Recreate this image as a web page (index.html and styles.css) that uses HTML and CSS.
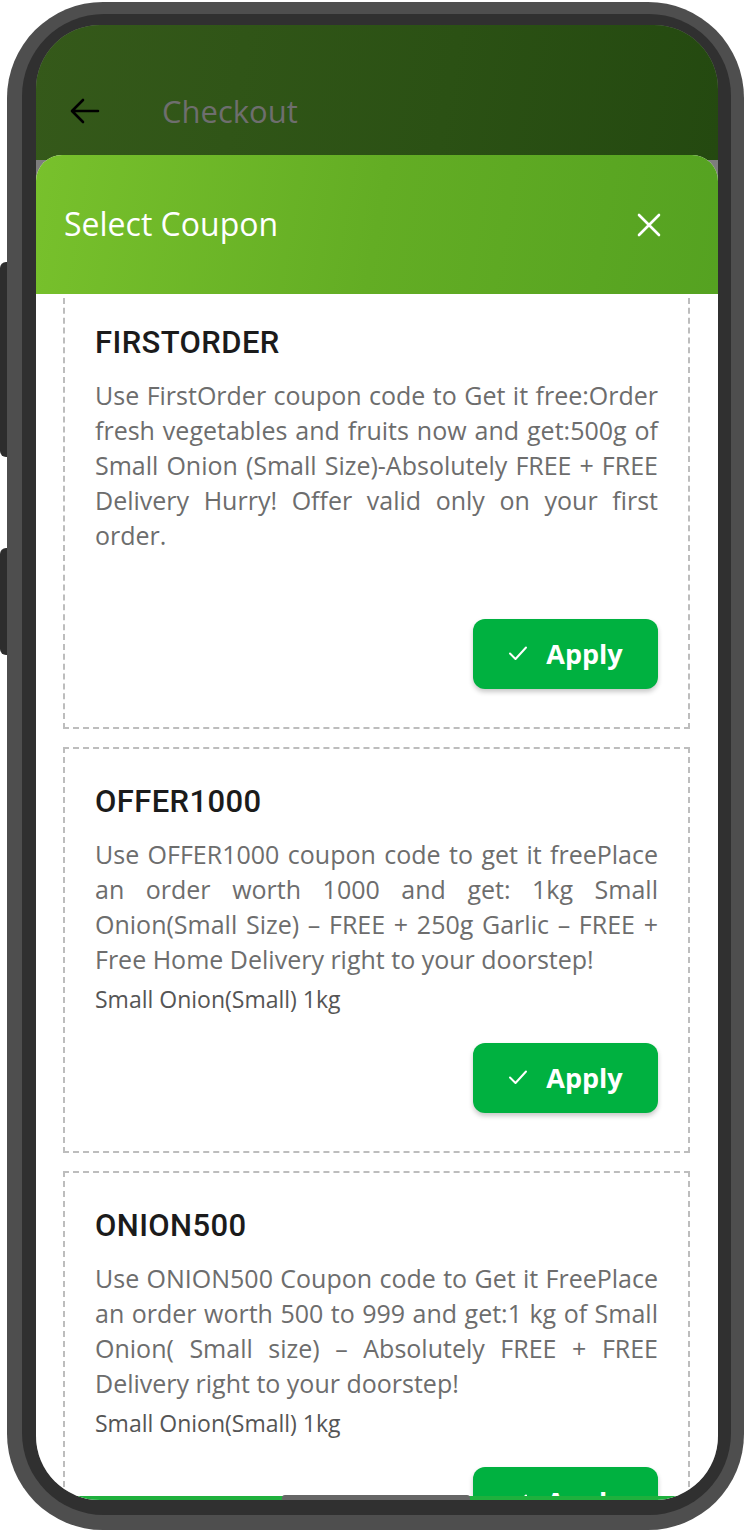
FILE: index.html
```html
<!DOCTYPE html>
<html lang="en">
<head>
  <meta charset="UTF-8" />
  <meta name="viewport" content="width=device-width, initial-scale=1.0" />
  <title>Checkout - Select Coupon</title>
  <link rel="stylesheet" href="styles.css">
</head>
<body>
  <div class="device">
    <span class="side-btn side-btn-top"></span>
    <span class="side-btn side-btn-bottom"></span>

    <div class="phone">
      <div class="bezel">
        <div class="screen">
          <header class="appbar">
            <svg class="back" width="30" height="26" viewBox="0 0 30 26">
              <path d="M28 13H3M13 2L2 13l11 11" fill="none" stroke="#000" stroke-width="2.6" stroke-linecap="round" stroke-linejoin="round"/>
            </svg>
            <h1>Checkout</h1>
          </header>

          <section class="sheet">
            <div class="sheet-head">
              <h2>Select Coupon</h2>
              <svg class="close" width="24" height="24" viewBox="0 0 24 24">
                <path d="M2 2l20 20M22 2L2 22" stroke="#fff" stroke-width="2.6" stroke-linecap="round"/>
              </svg>
            </div>

            <div class="coupon-list" id="couponList"></div>
          </section>

          <div class="nav-strip"></div>
          <div class="home-pill"></div>
        </div>
      </div>
    </div>
  </div>

  <script>
    const coupons = [
      {
        code: "FIRSTORDER",
        text: "Use FirstOrder coupon code to Get it free:Order fresh vegetables and fruits now and get:500g of Small Onion (Small Size)-Absolutely FREE + FREE Delivery Hurry! Offer valid only on your first order.",
        product: ""
      },
      {
        code: "OFFER1000",
        text: "Use OFFER1000 coupon code to get it freePlace an order worth 1000 and get: 1kg Small Onion(Small Size) \u2013 FREE + 250g Garlic \u2013 FREE + Free Home Delivery right to your doorstep!",
        product: "Small Onion(Small) 1kg"
      },
      {
        code: "ONION500",
        text: "Use ONION500 Coupon code to Get it FreePlace an order worth 500 to 999 and get:1 kg of Small Onion( Small size) \u2013 Absolutely FREE + FREE Delivery right to your doorstep!",
        product: "Small Onion(Small) 1kg"
      }
    ];

    const list = document.getElementById("couponList");
    coupons.forEach(c => {
      const card = document.createElement("div");
      card.className = "coupon";
      card.innerHTML = `
        <h3>${c.code}</h3>
        <p class="desc">${c.text}</p>
        <p class="product">${c.product}</p>
        <div class="actions">
          <button class="apply">
            <svg width="20" height="16" viewBox="0 0 20 16"><path d="M2 8.5l5.5 5.5L18 2.5" fill="none" stroke="#fff" stroke-width="2" stroke-linecap="round" stroke-linejoin="round"/></svg>
            Apply
          </button>
        </div>`;
      list.appendChild(card);
    });
  </script>
</body>
</html>
```

FILE: styles.css
```css
body {
  margin: 0;
  background: #fff;
  font-family: 'Open Sans', sans-serif;
}

.device {
  position: relative;
  width: 744px;
  height: 1531px;
}

.side-btn {
  position: absolute;
  left: 0;
  width: 8px;
  background: #2d2d2d;
  border-radius: 6px 0 0 6px;
}

.side-btn-top {
  top: 262px;
  height: 195px;
}

.side-btn-bottom {
  top: 548px;
  height: 107px;
}

.phone {
  position: absolute;
  top: 2px;
  left: 7px;
  width: 737px;
  box-sizing: border-box;
  padding: 12px 13px 15px 15px;
  background: #4e4e4e;
  border-radius: 96px;
}

.bezel {
  padding: 11px 13px 15px 14px;
  background: #303030;
  border-radius: 82px;
}

.screen {
  position: relative;
  width: 682px;
  height: 1475px;
  overflow: hidden;
  border-radius: 64px;
  background: #7d7d7d;
}

.appbar {
  height: 135px;
  display: flex;
  align-items: center;
  box-sizing: border-box;
  padding: 50px 0 13px 34px;
  background: linear-gradient(100deg, #35591a 0%, #2b5114 60%, #244910 100%);
}

.appbar .back {
  flex: none;
}

.appbar h1 {
  margin: 0 0 0 62px;
  font-size: 31px;
  font-weight: 400;
  color: #6e6e6e;
}

.sheet {
  position: absolute;
  top: 130px;
  left: 0;
  right: 0;
  bottom: 0;
  background: #fff;
  border-radius: 26px 26px 0 0;
  overflow: hidden;
}

.sheet-head {
  position: relative;
  z-index: 1;
  height: 139px;
  display: flex;
  align-items: center;
  justify-content: space-between;
  padding: 0 57px 0 28px;
  background: linear-gradient(100deg, #78c12c 0%, #63ad24 50%, #55a221 100%);
}

.sheet-head h2 {
  margin: 0 0 2px;
  font-size: 32px;
  font-weight: 400;
  color: #fff;
}

.coupon-list {
  margin-top: -6px;
  padding: 0 28px 0 27px;
}

.coupon {
  border: 2px dashed #bdbdbd;
  padding: 36px 30px 38px 30px;
  margin-bottom: 18px;
}

.coupon h3 {
  margin: 0;
  font-family: Roboto, sans-serif;
  font-weight: 500;
  font-size: 31px;
  letter-spacing: 0.4px;
  line-height: 34px;
  color: #1b1b1b;
}

.desc {
  margin: 18px 0 0;
  font-size: 25px;
  line-height: 35px;
  color: #6d6d6d;
  text-align: justify;
}

.product {
  margin: 7px 0 0;
  height: 30px;
  font-size: 23px;
  line-height: 30px;
  color: #555;
}

.actions {
  display: flex;
  justify-content: flex-end;
  margin-top: 29px;
}

.apply {
  width: 185px;
  height: 70px;
  display: flex;
  align-items: center;
  justify-content: center;
  gap: 18px;
  padding: 0 0 2px;
  border: none;
  border-radius: 12px;
  background: #00b140;
  box-shadow: 0 3px 5px rgba(0, 0, 0, 0.22);
  font-family: 'Open Sans', sans-serif;
  font-weight: 700;
  font-size: 27px;
  color: #fff;
  cursor: pointer;
}

.nav-strip {
  position: absolute;
  left: 0;
  right: 0;
  bottom: 0;
  height: 4px;
  background: #1fb03d;
}

.home-pill {
  position: absolute;
  bottom: 0;
  left: 246px;
  width: 188px;
  height: 5px;
  background: #666;
  border-radius: 3px 3px 0 0;
}
```
